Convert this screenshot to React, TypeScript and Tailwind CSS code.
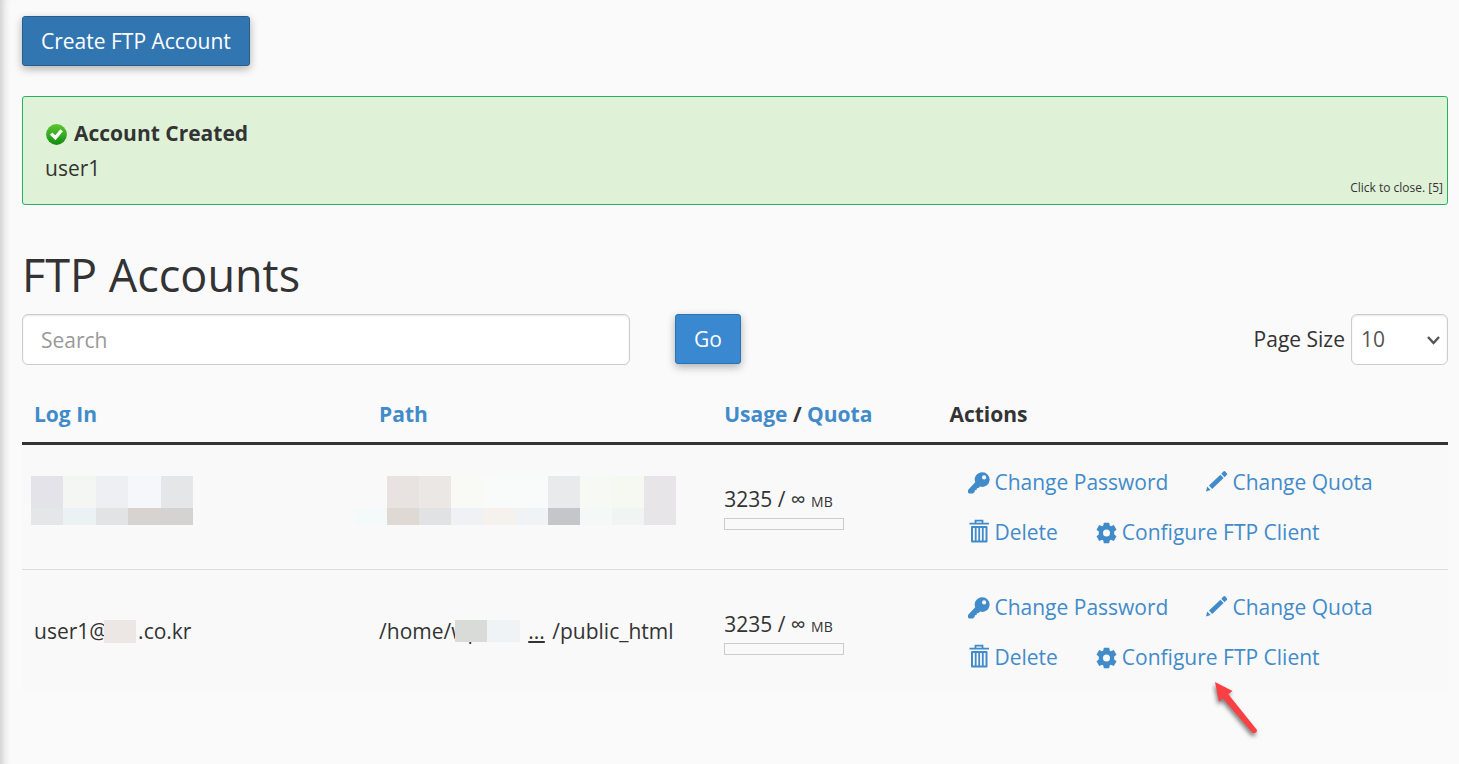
import React from "react";

const KeyIcon = () => (
  <svg className="w-[22px] h-[22px] shrink-0" viewBox="0 0 22 22" fill="currentColor" aria-hidden="true">
    <path
      fillRule="evenodd"
      d="M14 0.300a7.300 7.300 0 1 1-2 14.200L10.600 16l-1.700.3-.3 1.700-1.700.3-.3 1.700-1.700 1.500H.9L0 20.500v-2.600L7.200 10.300A7.300 7.300 0 0 1 14 .3Zm2.100 3a2.100 2.100 0 1 0 0 4.200 2.100 2.100 0 0 0 0-4.200Z"
    />
  </svg>
);

const PencilIcon = () => (
  <svg className="w-[22px] h-[22px] mb-1 shrink-0" viewBox="0 0 22 22" fill="currentColor" aria-hidden="true">
    <path d="M0 21.400 1.200 16.600 4.600 20Z" />
    <path d="M3 15.600 14.400 4.700l3.200 3.400L6.200 19Z" />
    <path d="M15.300 3.800 17.700 1.300q.7-.6 1.300 0l2 2.100q.6.700 0 1.300l-2.500 2.500Z" />
  </svg>
);

const TrashIcon = () => (
  <svg className="w-[22px] h-6 mb-1 shrink-0" viewBox="0 0 22 24" fill="none" stroke="currentColor" aria-hidden="true">
    <path d="M1.500 4.600H21M7.500 4V1.700h7V4" strokeWidth="1.8" />
    <path d="M4 8h14.500v14.500H4Z" strokeWidth="2" strokeLinejoin="round" />
    <path d="M7.700 8v14M11.200 8v14M14.800 8v14" strokeWidth="1.800" />
  </svg>
);

const GearIcon = () => (
  <svg className="w-[22px] h-[22px] shrink-0" viewBox="0 0 22 22" fill="currentColor" aria-hidden="true">
    <path
      fillRule="evenodd"
      d="M7.800.8h5.400l.5 2.800 1.200.7 2.900-1.200 2.700 4.700-2.300 1.800v2.800l2.300 1.800-2.700 4.700-2.900-1.200-1.200.7-.5 2.800H7.800l-.5-2.800-1.200-.7-2.900 1.200-2.700-4.700 2.300-1.800V9.600L.5 7.800l2.700-4.700 2.900 1.200 1.200-.7ZM10.500 7.500a3.500 3.500 0 1 0 0 7 3.500 3.500 0 0 0 0-7Z"
    />
  </svg>
);

const SuccessIcon = () => (
  <svg className="w-[22px] h-[22px] shrink-0" viewBox="0 0 22 22" aria-hidden="true">
    <defs>
      <linearGradient id="ok" x1="0" y1="0" x2="0" y2="1">
        <stop offset="0" stopColor="#5fc52c" />
        <stop offset="0.5" stopColor="#35ad24" />
        <stop offset="1" stopColor="#128a10" />
      </linearGradient>
    </defs>
    <circle cx="11.500" cy="11.500" r="10.400" fill="url(#ok)" />
    <path d="m6.200 10.600 4.200 4.200 6.200-7.600" fill="none" stroke="#fff" strokeWidth="3.400" />
  </svg>
);

const Arrow = () => (
  <svg className="absolute left-[134px] top-[46px] w-[52px] h-[66px] pointer-events-none" viewBox="0 0 52 66" aria-hidden="true">
    <path
      d="M4 3 21.500 12l-4.200 3.300 28.500 35.500q.8 3.400-2.800 3.200-1.500.2-2.800-1.600L12 19.500l-4 3.200Z"
      fill="#fa4043"
      style={{ filter: "drop-shadow(-1px 3px 2px rgba(0,0,0,0.5))" }}
    />
  </svg>
);

const actionClass = "relative inline-flex items-center gap-1 h-[50px] px-[19px] text-[#428bca]";

const Actions = ({ pointed }: { pointed?: boolean }) => (
  <div className="flex flex-wrap">
    <a href="#password" className={actionClass}>
      <KeyIcon />
      Change Password
    </a>
    <a href="#quota" className={actionClass}>
      <PencilIcon />
      Change Quota
    </a>
    <a href="#delete" className={actionClass}>
      <TrashIcon />
      Delete
    </a>
    <a href="#configure" className={actionClass}>
      <GearIcon />
      Configure FTP Client
      {pointed && <Arrow />}
    </a>
  </div>
);

const Usage = () => (
  <>
    <div className="leading-8">
      3235 / ∞ <span className="text-[14px]">MB</span>
    </div>
    <div className="w-[120px] h-3 border border-[#ccc]" />
  </>
);

const Login = () => (
  <div className="grid grid-cols-5 grid-rows-[32px_17px] w-[162px] -ml-[3px] mb-3">
    <span className="bg-[#e4e3e9]" />
    <span className="bg-[#f4f6f3]" />
    <span className="bg-[#eeeff2]" />
    <span className="bg-[#f6f7fa]" />
    <span className="bg-[#e5e6e8]" />
    <span className="bg-[#e5e6e8]" />
    <span className="bg-[#eaf2f3]" />
    <span className="bg-[#e2e3e5]" />
    <span className="bg-[#d7d3d1]" />
    <span className="bg-[#d4d3d1]" />
  </div>
);

const Path = () => (
  <div className="grid grid-cols-10 grid-rows-[32px_17px] w-[321px] -ml-6 mb-3">
    <span />
    <span className="bg-[#e8e3e0]" />
    <span className="bg-[#ebe7e4]" />
    <span className="bg-[#f9f9f6]" />
    <span className="bg-[#f9fafa]" />
    <span className="bg-[#f9fafa]" />
    <span className="bg-[#e8eaec]" />
    <span className="bg-[#f6f9f4]" />
    <span className="bg-[#f6f8f2]" />
    <span className="bg-[#e7e5e7]" />
    <span className="bg-[#f4f9fa]" />
    <span className="bg-[#dfd9d3]" />
    <span className="bg-[#e1e2e4]" />
    <span className="bg-[#eff1f4]" />
    <span className="bg-[#f5f1ed]" />
    <span className="bg-[#eff3f6]" />
    <span className="bg-[#c4c6c9]" />
    <span className="bg-[#f4f8f6]" />
    <span className="bg-[#f0f5f3]" />
    <span className="bg-[#e7e5e7]" />
  </div>
);

const App = () => {
  return (
    <div className="min-h-screen bg-[#fafafa] shadow-[inset_10px_0_10px_-8px_rgba(0,0,0,0.22)] pl-[22px] pr-[11px] pt-4 pb-[72px] font-['Open_Sans',sans-serif] text-[21px] leading-[35px] text-[#333]">
      <button className="h-[50px] px-[18px] rounded-[3px] border border-[#285e8e] bg-[#3276b1] text-white shadow-[0_3px_8px_rgba(0,0,0,0.3)]">
        Create FTP Account
      </button>

      {/* Notice */}
      <div className="relative mt-[30px] h-[109px] pt-[19px] px-[22px] rounded-[3px] border border-[#27b060] bg-[#dff2d8]">
        <div className="flex items-center gap-[7px] font-bold">
          <SuccessIcon />
          Account Created
        </div>
        <div>user1</div>
        <button className="absolute right-1 bottom-2 text-[12px] leading-4">Click to close. [5]</button>
      </div>

      <h1 className="mt-[40px] text-[45px] leading-[60px]">FTP Accounts</h1>

      {/* Search and page size */}
      <div className="flex items-center justify-between mt-[9px]">
        <form className="flex items-start gap-[45px]">
          <input
            type="text"
            aria-label="Search"
            placeholder="Search"
            className="w-[608px] h-[51px] px-[18px] rounded-md border border-[#ccc] bg-white shadow-[inset_0_1px_2px_rgba(0,0,0,0.1)] placeholder:text-[#999]"
          />
          <button
            type="button"
            className="h-[50px] px-[18px] rounded-[3px] border border-[#2a73b5] bg-[#3a89d0] text-white shadow-[0_3px_8px_rgba(0,0,0,0.3)]"
          >
            Go
          </button>
        </form>
        <div className="flex items-center gap-[6px]">
          <label htmlFor="page-size">Page Size</label>
          <div className="relative">
            <select
              id="page-size"
              defaultValue="10"
              className="block appearance-none w-[97px] h-[51px] pl-[9px] rounded-md border border-[#ccc] bg-white text-[#555] shadow-[inset_0_1px_2px_rgba(0,0,0,0.1)]"
            >
              <option>10</option>
              <option>20</option>
              <option>50</option>
            </select>
            <svg className="absolute right-2 top-[21px] w-[13px] h-[10px] pointer-events-none" viewBox="0 0 13 10" aria-hidden="true">
              <path d="M1 2l5.500 6L12 2" fill="none" stroke="#555" strokeWidth="2.400" />
            </svg>
          </div>
        </div>
      </div>

      {/* Accounts */}
      <table className="w-full mt-[22px] table-fixed border-collapse text-left">
        <colgroup>
          <col className="w-[24.2%]" />
          <col className="w-[24.2%]" />
          <col className="w-[15.8%]" />
          <col />
        </colgroup>
        <thead>
          <tr className="h-14 border-b-3 border-[#333]">
            <th className="px-3">
              <a href="#login" className="text-[#428bca]">Log In</a>
            </th>
            <th className="px-3">
              <a href="#path" className="text-[#428bca]">Path</a>
            </th>
            <th className="px-3">
              <a href="#usage" className="text-[#428bca]">Usage</a> / <a href="#limit" className="text-[#428bca]">Quota</a>
            </th>
            <th className="px-3">Actions</th>
          </tr>
        </thead>
        <tbody className="bg-[#f9f9f9]">
          <tr className="border-b border-[#ddd]">
            <td className="px-3">
              <Login />
            </td>
            <td className="px-3">
              <Path />
            </td>
            <td className="px-3">
              <Usage />
            </td>
            <td className="px-3 pt-[13px] pb-[11px]">
              <Actions />
            </td>
          </tr>
          <tr>
            <td className="px-3 whitespace-nowrap">
              user1@
              <span className="relative inline-block w-8 h-[23px] -ml-1 mr-[2px] mb-1 align-middle bg-[#ece7e4]" />
              .co.kr
            </td>
            <td className="px-3 whitespace-nowrap">
              /home/
              <span className="relative inline-block w-[77px]">
                wp
                <span className="absolute left-1 top-[6px] flex">
                  <span className="w-8 h-[22px] bg-[#d9dbd8]" />
                  <span className="w-[33px] h-[22px] bg-[#eff3f6]" />
                </span>
              </span>
              <a href="#full-path" className="mr-[2px] underline">...</a> /public_html
            </td>
            <td className="px-3">
              <Usage />
            </td>
            <td className="px-3 pt-[13px] pb-[11px]">
              <Actions pointed />
            </td>
          </tr>
        </tbody>
      </table>
    </div>
  );
};

export default App;
